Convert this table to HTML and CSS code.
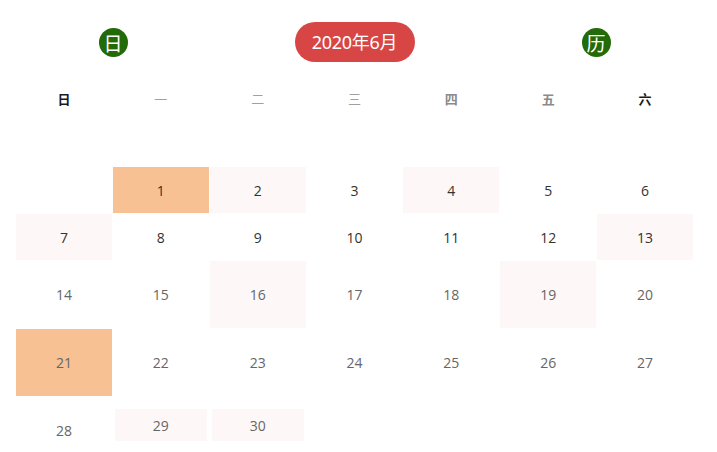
FILE: index.html
```html
<!DOCTYPE html>
<html lang="zh">
<head>
<meta charset="utf-8">
<title>2020年6月</title>
<link rel="stylesheet" href="styles.css">
</head>
<body>
<div class="cal">
  <div class="head">
    <span class="dot">日</span>
    <span class="pill">2020年6月</span>
    <span class="dot">历</span>
  </div>
  <div class="week">
    <span class="wk strong">日</span>
    <span class="wk light">一</span>
    <span class="wk light">二</span>
    <span class="wk light">三</span>
    <span class="wk mid">四</span>
    <span class="wk mid">五</span>
    <span class="wk strong">六</span>
  </div>
  <div class="days">
    <span class="day"></span>
    <span class="day hot dark">1</span>
    <span class="day warm dark">2</span>
    <span class="day dark">3</span>
    <span class="day warm dark">4</span>
    <span class="day dark">5</span>
    <span class="day dark">6</span>

    <span class="day warm dark">7</span>
    <span class="day dark">8</span>
    <span class="day dark">9</span>
    <span class="day dark">10</span>
    <span class="day dark">11</span>
    <span class="day dark">12</span>
    <span class="day warm dark">13</span>

    <span class="day">14</span>
    <span class="day">15</span>
    <span class="day warm">16</span>
    <span class="day">17</span>
    <span class="day">18</span>
    <span class="day warm">19</span>
    <span class="day">20</span>

    <span class="day hot">21</span>
    <span class="day">22</span>
    <span class="day">23</span>
    <span class="day">24</span>
    <span class="day">25</span>
    <span class="day">26</span>
    <span class="day">27</span>

    <span class="day">28</span>
    <span class="day warm small">29</span>
    <span class="day warm small">30</span>
  </div>
</div>
</body>
</html>
```

FILE: styles.css
```css
html, body {
  margin: 0;
  padding: 0;
  background: #ffffff;
}

body {
  font-family: "Open Sans", "Noto Sans", "Noto Sans CJK SC", sans-serif;
  overflow: hidden;
}

.cal {
  padding: 0 24px 0 16px;
}

.head {
  height: 40px;
  padding-top: 22px;
  padding-bottom: 18px;
  display: flex;
  justify-content: center;
  align-items: center;
  gap: 167px;
}

.dot {
  width: 29px;
  height: 29px;
  border-radius: 50%;
  background: #236a08;
  color: #ffffff;
  font-family: "Noto Sans CJK SC", sans-serif;
  font-size: 19px;
  line-height: 29px;
  text-align: center;
}

.pill {
  width: 120px;
  height: 40px;
  border-radius: 20px;
  background: #d84545;
  color: #ffffff;
  font-family: "Noto Sans", "Noto Sans CJK SC", sans-serif;
  font-size: 18px;
  line-height: 40px;
  text-align: center;
  letter-spacing: -0.3px;
}

.week {
  display: grid;
  grid-template-columns: repeat(7, 1fr);
  column-gap: 1px;
  height: 38px;
  margin-bottom: 49px;
}

.wk {
  font-family: "Noto Sans CJK SC", sans-serif;
  font-size: 13px;
  line-height: 38px;
  text-align: center;
}

.wk.strong {
  color: #1a1a1a;
  font-weight: 700;
}

.wk.light {
  color: #a0a0a0;
}

.wk.mid {
  color: #8a8a8a;
  font-weight: 700;
}

.days {
  display: grid;
  grid-template-columns: repeat(7, 1fr);
  grid-template-rows: 46px 46px 67px 67px 66px;
  column-gap: 1px;
  row-gap: 1px;
}

.day {
  display: flex;
  align-items: center;
  justify-content: center;
  font-size: 14px;
  color: #666666;
}

.day.dark {
  color: #333333;
}

.day.warm {
  background: #fdf8f7;
}

.day.hot {
  background: #f7c193;
}

.day.small {
  margin: 12px 2px 0;
  height: 32px;
  align-self: start;
}
```
